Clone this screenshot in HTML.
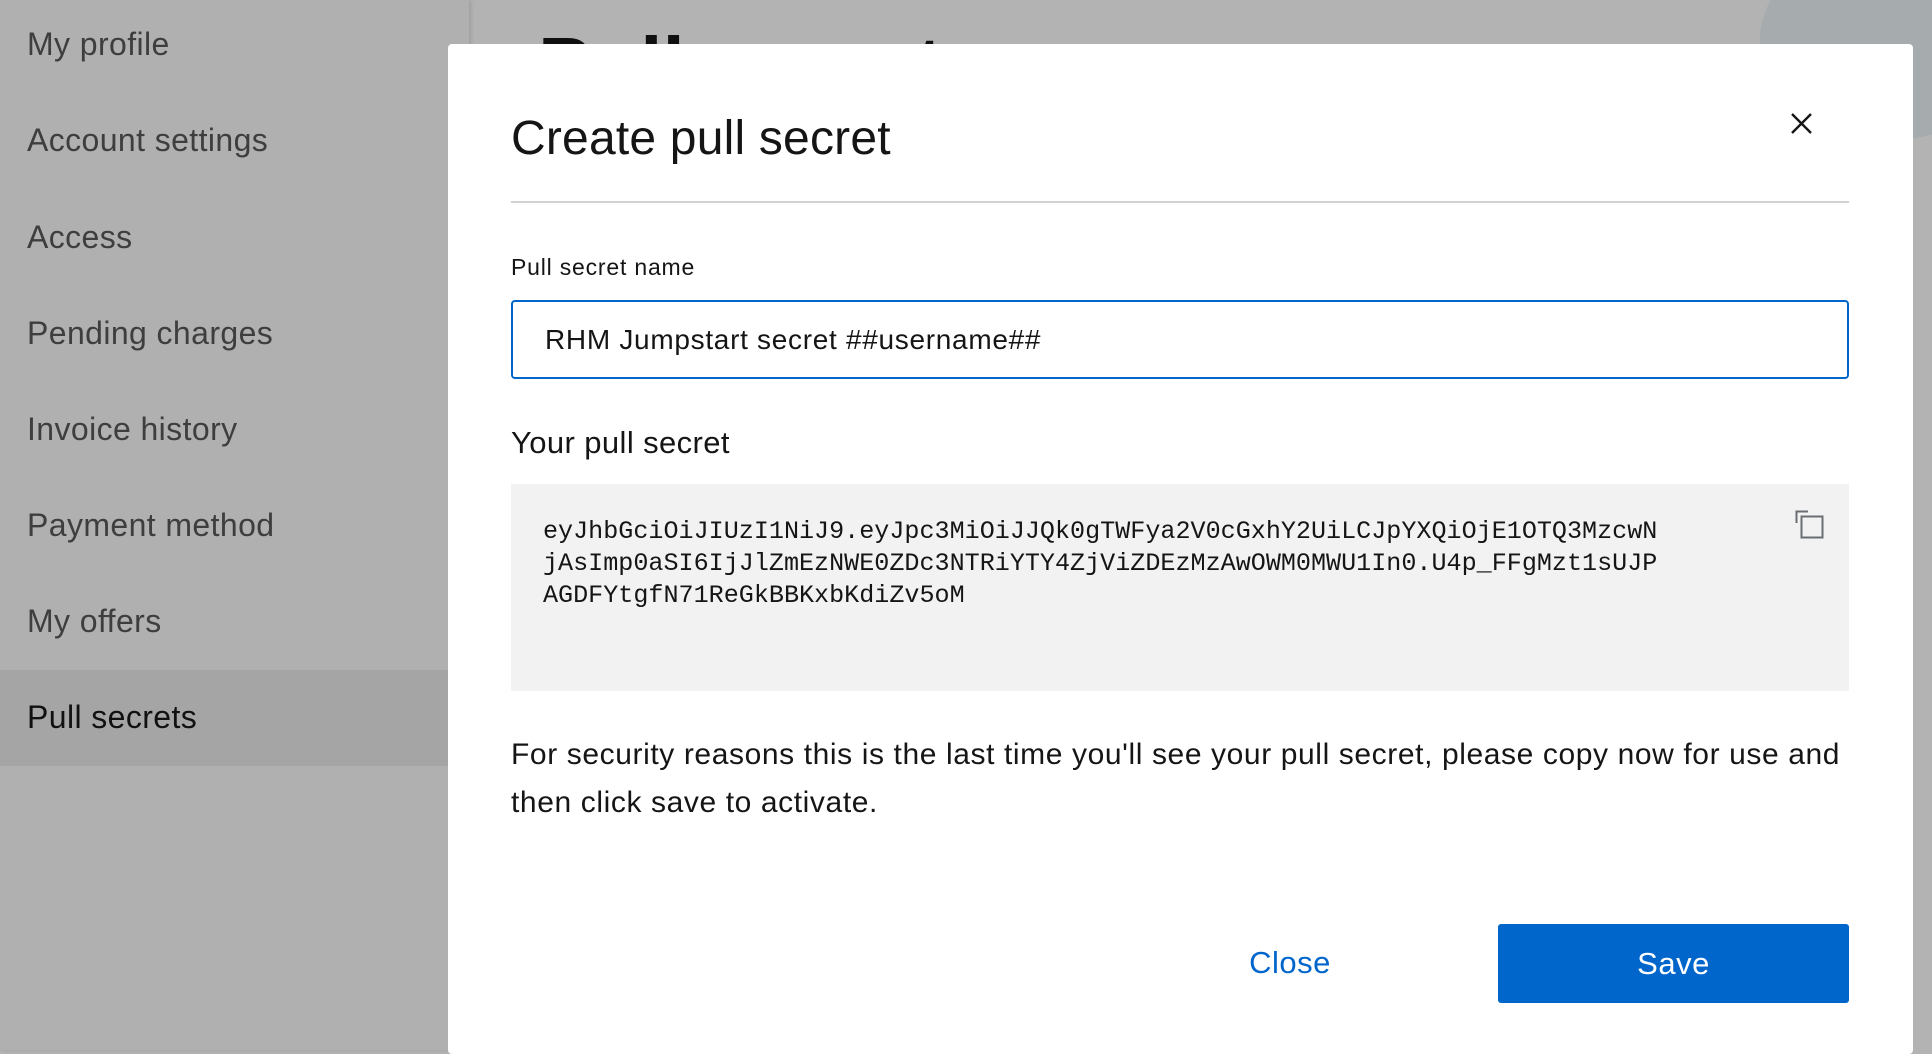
<!DOCTYPE html>
<html><head><meta charset="utf-8"><style>
*{margin:0;padding:0;box-sizing:border-box}
body{width:1932px;height:1050px;overflow:hidden;background:#b3b3b3;font-family:"Liberation Sans",sans-serif;position:relative}
.side{position:absolute;left:0;top:0;width:469px;height:1050px;background:#b0b0b0;box-shadow:2px 0 4px rgba(0,0,0,.12)}
.side div{position:absolute;left:27px;font-size:32px;color:#3e3e3e;line-height:40px;letter-spacing:0.4px}
.side .act{left:0;width:469px;height:96px;top:670px;background:#a5a5a5}
.bgtitle{position:absolute;left:538px;top:20px;font-size:80px;font-weight:bold;color:#101010}
.cloud{position:absolute;left:1760px;top:-60px;width:260px;height:200px;border-radius:50%;background:#a6abae}
.modal{position:absolute;left:448px;top:44px;width:1465px;height:1010px;background:#fff;border-radius:4px}
.abs{position:absolute}
</style></head><body>
<div class="side">
<div class="act"></div>
<div style="top:24px">My profile</div>
<div style="top:120px">Account settings</div>
<div style="top:217px">Access</div>
<div style="top:313px">Pending charges</div>
<div style="top:409px">Invoice history</div>
<div style="top:505px">Payment method</div>
<div style="top:601px">My offers</div>
<div style="top:697px;color:#111">Pull secrets</div>
</div>
<div class="bgtitle">Pull secrets</div>
<div class="cloud"></div>
<div class="modal"></div>
<div class="abs" style="left:511px;top:111px;font-size:48px;color:#151515;letter-spacing:0.2px">Create pull secret</div>
<svg class="abs" style="left:1791px;top:113px" width="21" height="21" viewBox="0 0 21 21"><path d="M1 1L20 20M20 1L1 20" stroke="#151515" stroke-width="2.4"/></svg>
<div class="abs" style="left:511px;top:201px;width:1338px;height:2px;background:#d2d2d2"></div>
<div class="abs" style="left:511px;top:254px;font-size:23px;color:#151515;letter-spacing:0.8px">Pull secret name</div>
<div class="abs" style="left:511px;top:300px;width:1338px;height:79px;border:2px solid #0066cc;border-radius:4px"></div>
<div class="abs" style="left:545px;top:324px;font-size:28px;color:#151515;letter-spacing:0.7px">RHM Jumpstart secret ##username##</div>
<div class="abs" style="left:511px;top:425px;font-size:31px;color:#151515;letter-spacing:0.4px">Your pull secret</div>
<div class="abs" style="left:511px;top:484px;width:1338px;height:207px;background:#f2f2f2"></div>
<div class="abs" style="left:543px;top:516px;font-family:'Liberation Mono',monospace;font-size:25.1px;line-height:32px;color:#151515;white-space:pre">eyJhbGciOiJIUzI1NiJ9.eyJpc3MiOiJJQk0gTWFya2V0cGxhY2UiLCJpYXQiOjE1OTQ3MzcwN
jAsImp0aSI6IjJlZmEzNWE0ZDc3NTRiYTY4ZjViZDEzMzAwOWM0MWU1In0.U4p_FFgMzt1sUJP
AGDFYtgfN71ReGkBBKxbKdiZv5oM</div>
<svg class="abs" style="left:1795px;top:510px" width="29" height="29" viewBox="0 0 29 29"><path d="M1.5 13V1.5H13" fill="none" stroke="#6a6e73" stroke-width="2"/><rect x="6.5" y="6.5" width="21" height="21" fill="none" stroke="#6a6e73" stroke-width="2"/></svg>
<div class="abs" style="left:511px;top:731px;width:1345px;font-size:30px;line-height:48px;color:#151515;letter-spacing:0.6px">For security reasons this is the last time you'll see your pull secret, please copy now for use and then click save to activate.</div>
<div class="abs" style="left:1230px;top:945px;width:120px;text-align:center;font-size:31px;color:#0066cc;letter-spacing:0.5px">Close</div>
<div class="abs" style="left:1498px;top:924px;width:351px;height:79px;background:#0066cc;border-radius:3px;color:#fff;font-size:31px;text-align:center;line-height:79px;letter-spacing:0.5px">Save</div>
</body></html>
